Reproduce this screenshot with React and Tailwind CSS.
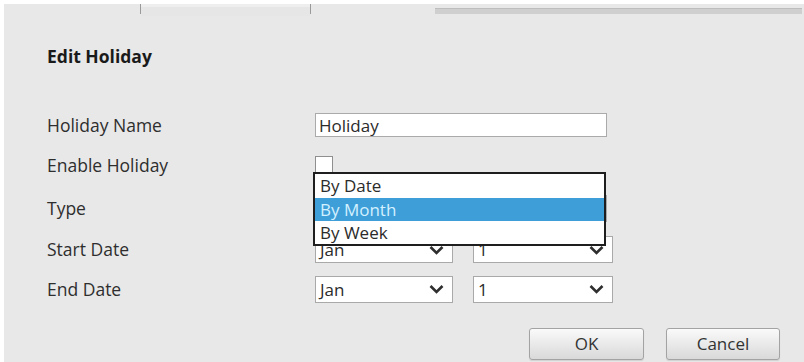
function Chevron() {
  return (
    <svg width="15" height="10" viewBox="0 0 15 10" className="text-[#2e2e2e]">
      <path d="M1.5 2 L7.5 8 L13.5 2" fill="none" stroke="currentColor" strokeWidth="2.6" strokeLinejoin="miter" />
    </svg>
  );
}

function Select({ value, width }) {
  return (
    <div
      className={`flex items-center justify-between h-[27px] bg-white border border-[#a9a9a9] pl-[4px] pr-[8px] ${width}`}
    >
      <span className="text-[17px] leading-none text-[#2b2b2b]">{value}</span>
      <Chevron />
    </div>
  );
}

function Row({ label, h, children }) {
  return (
    <div className={`flex items-center ${h}`}>
      <div className="w-[268px] text-[17.5px] text-[#2e2e2e]">{label}</div>
      <div className="flex-1 flex items-center">{children}</div>
    </div>
  );
}

export default function App() {
  return (
    <div
      className="w-[804px] h-[362px] bg-white pl-[4px] pt-[4px] overflow-hidden"
      style={{ fontFamily: '"Open Sans", "Noto Sans", sans-serif' }}
    >
      <div className="h-full bg-[#e8e8e8] flex flex-col">
        {/* tab strip */}
        <div className="h-[12px] flex items-start">
          <div className="w-[136px] h-full" />
          <div className="w-[1px] h-[10px] bg-[#9a9a9a]" />
          <div className="w-[169px] h-full border-t-[3px] border-[#eeeeee] bg-[#e6e6e6]" />
          <div className="w-[1px] h-[10px] bg-[#9a9a9a]" />
          <div className="w-[124px] h-full" />
          <div className="flex-1 h-[6px] mt-[4px] mr-[2px] bg-[#cfcfcf] border-t border-[#bdbdbd]" />
        </div>

        <div className="pl-[43px] pt-[32px] h-[34px]">
          <h1 className="text-[17.5px] font-bold text-[#1a1a1a] leading-none">Edit Holiday</h1>
        </div>

        {/* form */}
        <div className="pl-[43px] pt-[55px] flex flex-col">
          <Row label="Holiday Name" h="h-[40px]">
            <div className="w-[292px] h-[24px] bg-white border border-[#aaa] pl-[3px] flex items-center text-[17px] text-[#2b2b2b] leading-none">
              Holiday
            </div>
          </Row>
          <Row label="Enable Holiday" h="h-[40px]">
            <div className="w-[18px] h-[17px] bg-white border border-[#8f8f8f] -mt-[2px]" />
          </Row>
          <Row label="Type" h="h-[46px]">
            <div className="relative z-10">
              <Select value="By Month" width="w-[292px]" />
              <div className="absolute -top-[23px] -left-[2px] w-[293px] bg-white border-2 border-[#1e1e1e] flex flex-col text-[17px] leading-none">
                <div className="h-[24px] flex items-center pl-[5px] text-[#2b2b2b]">By Date</div>
                <div className="h-[23px] flex items-center pl-[5px] bg-[#3e9ed8] text-[#d3f1ff]">By Month</div>
                <div className="h-[23px] flex items-center pl-[5px] text-[#2b2b2b]">By Week</div>
              </div>
            </div>
          </Row>
          <Row label="Start Date" h="h-[37px]">
            <div className="flex gap-[20px]">
              <Select value="Jan" width="w-[138px]" />
              <Select value="1" width="w-[140px]" />
            </div>
          </Row>
          <Row label="End Date" h="h-[42px]">
            <div className="flex gap-[20px]">
              <Select value="Jan" width="w-[138px]" />
              <Select value="1" width="w-[140px]" />
            </div>
          </Row>
        </div>

        {/* buttons */}
        <div className="flex justify-end gap-[22px] pr-[24px] mt-[18px]">
          <button className="w-[115px] h-[32px] rounded-[3px] border border-[#a3a3a3] bg-gradient-to-b from-[#fafafa] to-[#d9d9d9] text-[17px] text-[#333] shadow-[0_1px_1px_rgba(0,0,0,0.1)]">
            OK
          </button>
          <button className="w-[114px] h-[32px] rounded-[3px] border border-[#a3a3a3] bg-gradient-to-b from-[#fafafa] to-[#d9d9d9] text-[17px] text-[#333] shadow-[0_1px_1px_rgba(0,0,0,0.1)]">
            Cancel
          </button>
        </div>
      </div>
    </div>
  );
}
